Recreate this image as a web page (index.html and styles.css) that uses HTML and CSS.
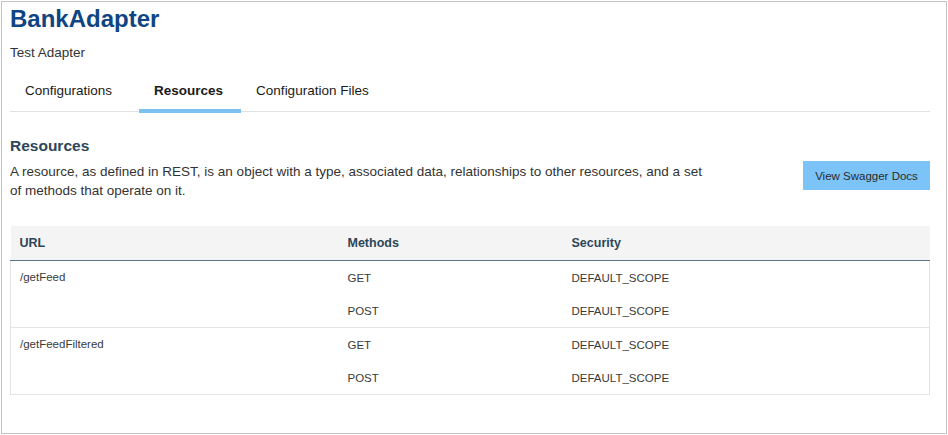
FILE: index.html
```html
<!DOCTYPE html>
<html lang="en">

<head>
    <meta charset="UTF-8">
    <meta name="viewport" content="width=device-width, initial-scale=1.0">
    <title>BankAdapter</title>
    <link rel="stylesheet" href="styles.css">
</head>

<body>
    <div class="page">
        <h1 class="title">BankAdapter</h1>
        <div class="subtitle">Test Adapter</div>

        <div class="tabs">
            <div class="tab">Configurations</div>
            <div class="tab active">Resources</div>
            <div class="tab">Configuration Files</div>
        </div>

        <h2 class="section-title">Resources</h2>
        <div class="intro">
            <p>A resource, as defined in REST, is an object with a type, associated data, relationships to other resources, and a set of methods that operate on it.</p>
            <button class="swagger-btn">View Swagger Docs</button>
        </div>

        <table class="res-table">
            <thead>
                <tr>
                    <th class="col-url">URL</th>
                    <th class="col-method">Methods</th>
                    <th>Security</th>
                </tr>
            </thead>
            <tbody>
                <tr class="group-start">
                    <td rowspan="2">/getFeed</td>
                    <td>GET</td>
                    <td class="last">DEFAULT_SCOPE</td>
                </tr>
                <tr>
                    <td>POST</td>
                    <td class="last">DEFAULT_SCOPE</td>
                </tr>
                <tr class="group-start">
                    <td rowspan="2">/getFeedFiltered</td>
                    <td>GET</td>
                    <td class="last">DEFAULT_SCOPE</td>
                </tr>
                <tr>
                    <td>POST</td>
                    <td class="last">DEFAULT_SCOPE</td>
                </tr>
            </tbody>
        </table>
    </div>
</body>

</html>
```

FILE: styles.css
```css
body {
    margin: 0;
    font-family: 'Liberation Sans', Arial, sans-serif;
    color: #333;
    background-color: #fff;
}

.page {
    margin: 1px;
    height: 433px;
    box-sizing: border-box;
    border: 1px solid #c4c4c4;
    padding: 0 16px 0 8px;
}

.title {
    margin: 3px 0 0;
    font-size: 24px;
    line-height: 28px;
    font-weight: bold;
    color: #0f4583;
}

.subtitle {
    margin-top: 12px;
    font-size: 13.5px;
    line-height: 16px;
    color: #333;
}

/* Tabs */
.tabs {
    display: flex;
    margin-top: 10px;
    border-bottom: 1px solid #e2e2e2;
}

.tab {
    padding: 12px 18px 10px 15px;
    font-size: 13.5px;
    line-height: 16px;
    color: #1a1a1a;
    border-bottom: 4px solid transparent;
    margin-bottom: -2px;
    cursor: pointer;
}

.tab:first-child {
    margin-right: 9px;
}

.tab.active {
    font-weight: bold;
    border-bottom-color: #7dc1f1;
}

.section-title {
    margin: 25px 0 0;
    font-size: 15.5px;
    line-height: 18px;
    font-weight: bold;
    color: #2c4658;
}

.intro {
    display: flex;
    justify-content: space-between;
    align-items: flex-start;
    margin-top: 7px;
}

.intro p {
    margin: 0;
    width: 700px;
    font-size: 13.5px;
    line-height: 19px;
    color: #333;
}

.swagger-btn {
    margin-top: -1px;
    width: 127px;
    height: 29px;
    border: none;
    background-color: #7cc4f8;
    color: #2a2a2a;
    font-family: inherit;
    font-size: 11.5px;
    padding: 0;
    cursor: pointer;
}

/* Table */
.res-table {
    margin-top: 26px;
    width: 920px;
    border-collapse: collapse;
    table-layout: fixed;
}

.res-table th {
    height: 34px;
    padding: 0 0 0 9px;
    text-align: left;
    font-size: 12.5px;
    font-weight: bold;
    color: #2c4658;
    background-color: #f4f4f4;
    border-bottom: 1px solid #5d7585;
}

.res-table .col-url {
    width: 319px;
}

.res-table .col-method {
    width: 215px;
}

.res-table td {
    height: 33px;
    padding: 0 0 0 9px;
    font-size: 11.5px;
    color: #3a3a3a;
    vertical-align: middle;
}

.res-table td[rowspan] {
    vertical-align: top;
    line-height: 33px;
    border-left: 1px solid #e4e4e4;
}

.res-table td.last {
    border-right: 1px solid #e4e4e4;
}

.res-table tr.group-start td {
    border-top: 1px solid #e4e4e4;
}

.res-table tbody tr:first-child td {
    border-top: none;
}

.res-table tbody tr:last-child td,
.res-table tbody td[rowspan] {
    border-bottom: 1px solid #e4e4e4;
}
```
